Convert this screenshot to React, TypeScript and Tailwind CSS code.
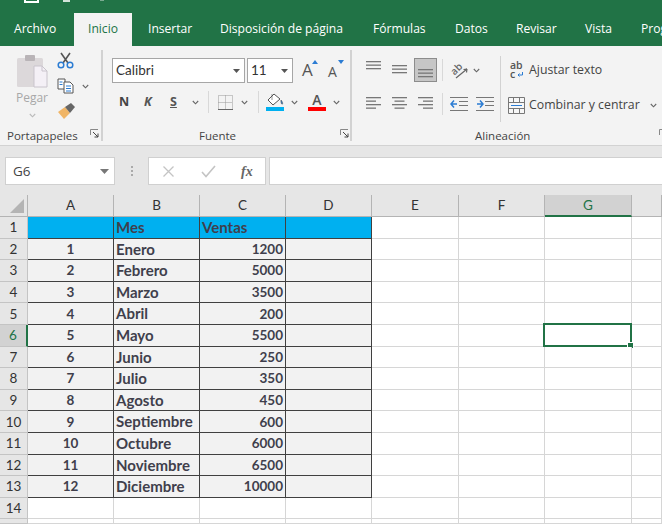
const TABS = [
  { label: 'Archivo', cls: 'ml-[14px] w-[44px]' },
  { label: 'Inicio', cls: 'ml-[16px] w-[58px] justify-center bg-[#f3f3f3] text-[#217346]' },
  { label: 'Insertar', cls: 'ml-[16px] w-[42px]' },
  { label: 'Disposición de página', cls: 'ml-[30px] w-[124px]' },
  { label: 'Fórmulas', cls: 'ml-[29px] w-[53px]' },
  { label: 'Datos', cls: 'ml-[29px] w-[32px]' },
  { label: 'Revisar', cls: 'ml-[29px] w-[40px]' },
  { label: 'Vista', cls: 'ml-[29px] w-[27px]' },
  { label: 'Programador', cls: 'ml-[29px] w-[70px]' },
];

const COLS = ['A', 'B', 'C', 'D', 'E', 'F', 'G', ''];

const DATA: Array<[string, string, string]> = [
  ['', 'Mes', 'Ventas'],
  ['1', 'Enero', '1200'],
  ['2', 'Febrero', '5000'],
  ['3', 'Marzo', '3500'],
  ['4', 'Abril', '200'],
  ['5', 'Mayo', '5500'],
  ['6', 'Junio', '250'],
  ['7', 'Julio', '350'],
  ['8', 'Agosto', '450'],
  ['9', 'Septiembre', '600'],
  ['10', 'Octubre', '6000'],
  ['11', 'Noviembre', '6500'],
  ['12', 'Diciembre', '10000'],
  ['', '', ''],
  ['', '', ''],
];

function Chev({ className = '' }: { className?: string }) {
  return (
    <svg width="7" height="5" viewBox="0 0 7 5" className={className}>
      <path d="M.8 1 3.5 3.8 6.2 1" fill="none" stroke="#666" strokeWidth="1.1" />
    </svg>
  );
}

function Launcher({ className = '' }: { className?: string }) {
  return (
    <svg width="9" height="9" viewBox="0 0 9 9" className={className}>
      <path d="M.5 6V.5H8" fill="none" stroke="#888" />
      <path d="M3 3 8 8M8 4.5V8H4.5" fill="none" stroke="#444" />
    </svg>
  );
}

function Lines({ widths, align }: { widths: number[]; align: 'left' | 'center' | 'right' }) {
  const x = (w: number) => (align === 'left' ? 0 : align === 'center' ? (15 - w) / 2 : 15 - w);
  return (
    <svg width="15" height={widths.length * 3.5} viewBox={`0 0 15 ${widths.length * 3.5}`}>
      {widths.map((w, i) => (
        <rect key={i} x={x(w)} y={i * 3.5} width={w} height="1.3" fill="#777" />
      ))}
    </svg>
  );
}

function VSep({ className = '' }: { className?: string }) {
  return <div className={`w-px h-[22px] bg-[#d8d8d8] ${className}`} />;
}

function Clipboard() {
  return (
    <div className="w-[103px] shrink-0 h-[91px] my-[4px] border-r-2 border-[#d2d2d2] flex flex-col relative">
      <div className="flex">
        <div className="ml-[15px] w-[34px] flex flex-col items-center">
          <svg width="32" height="33" viewBox="0 0 32 33" className="mt-[5px]">
            <rect x="1" y="3" width="26" height="29" rx="1.5" fill="#dcd8da" />
            <rect x="9" y="0" width="10" height="6" rx="1" fill="#b9b4b7" />
            <path d="M18 11h8l5 5v16H18z" fill="#f4f0f6" stroke="#c9c4cc" />
            <path d="M26 11v5h5" fill="none" stroke="#c9c4cc" />
          </svg>
          <span className="font-['Open_Sans',sans-serif] text-[12px] leading-[16px] mt-[2px] text-[#a8a8a8]">Pegar</span>
          <Chev className="mt-[7px] opacity-40" />
        </div>
        <div className="ml-[8px] flex flex-col">
          <svg width="17" height="17" viewBox="0 0 17 17" className="mt-[2px]">
            <path d="M4 1 11 11M13 1 6 11" stroke="#555" strokeWidth="1.6" fill="none" />
            <circle cx="4" cy="13" r="2.8" fill="none" stroke="#2b7cd3" strokeWidth="1.5" />
            <circle cx="13" cy="13" r="2.8" fill="none" stroke="#2b7cd3" strokeWidth="1.5" />
          </svg>
          <div className="flex items-center mt-[9px]">
            <svg width="17" height="16" viewBox="0 0 17 16">
              <path d="M1 1h7v10H1z" fill="#fff" stroke="#555" />
              <path d="M7 4h6l3 3v8H7z" fill="#fff" stroke="#555" />
              <path d="M9 8h5M9 10.5h5M9 13h5M2.5 4h3M2.5 6.5h3" stroke="#2b7cd3" />
            </svg>
            <Chev className="ml-[8px]" />
          </div>
          <svg width="19" height="16" viewBox="0 0 19 16" className="mt-[9px]">
            <path d="M1 9 8 4l5 6-6 6z" fill="#f0b566" />
            <path d="M8 4 14 0l4 4-5 6z" fill="#666" />
          </svg>
        </div>
      </div>
      <div className="absolute left-[7px] top-[78px] font-['Open_Sans',sans-serif] text-[11.5px] leading-[16px] text-[#444]">
        Portapapeles
      </div>
      <Launcher className="absolute left-[90px] top-[79px]" />
    </div>
  );
}

function Font() {
  return (
    <div className="w-[249px] shrink-0 h-[91px] my-[4px] border-r-2 border-[#d2d2d2] relative">
      <div className="flex items-center pt-[8px] pl-[9px]">
        <div className="w-[133px] h-[25px] bg-white border border-[#a6a6a6] flex items-center justify-between pl-[3px] pr-[4px]">
          <span className="font-['Lato',sans-serif] text-[13.5px] text-[#333]">Calibri</span>
          <svg width="7" height="4" viewBox="0 0 7 4"><path d="M0 0h7L3.500 4z" fill="#555" /></svg>
        </div>
        <div className="ml-[2px] w-[46px] h-[25px] bg-white border border-[#a6a6a6] flex items-center justify-between pl-[3px] pr-[4px]">
          <span className="font-['Lato',sans-serif] text-[13.5px] text-[#333]">11</span>
          <svg width="7" height="4" viewBox="0 0 7 4"><path d="M0 0h7L3.500 4z" fill="#555" /></svg>
        </div>
        <div className="ml-[9px] relative w-[15px] h-[20px] -mt-[5px]">
          <span className="font-['Open_Sans',sans-serif] text-[17px] leading-[20px] text-[#555]">A</span>
          <svg width="6" height="4" viewBox="0 0 6 4" className="absolute left-[10px] top-[2px]"><path d="M3 0 6 4H0z" fill="#2b7cd3" /></svg>
        </div>
        <div className="ml-[11px] relative w-[17px] h-[20px] -mt-[3px]">
          <span className="font-['Open_Sans',sans-serif] text-[14px] leading-[20px] text-[#555]">A</span>
          <svg width="6" height="4" viewBox="0 0 6 4" className="absolute left-[10px] top-[1px]"><path d="M0 0h6L3 4z" fill="#2b7cd3" /></svg>
        </div>
      </div>
      <div className="flex items-center mt-[7px] pl-[16px] h-[24px]">
        <span className="font-['Open_Sans',sans-serif] font-bold text-[12.5px] text-[#444] w-[10px]">N</span>
        <span className="font-['Open_Sans',sans-serif] font-bold italic text-[12.5px] text-[#555] w-[10px] ml-[15px]">K</span>
        <span className="font-['Open_Sans',sans-serif] font-bold underline text-[12.5px] text-[#555] w-[10px] ml-[16px]">S</span>
        <Chev className="ml-[12px]" />
        <VSep className="ml-[9px]" />
        <svg width="15" height="15" viewBox="0 0 15 15" className="ml-[9px]">
          <path d="M.5.5h14v14H.5zM7.500.5v14M.5 7.500h14" fill="none" stroke="#999" strokeDasharray="1 1" />
          <path d="M0 14.500h15" stroke="#666" />
        </svg>
        <Chev className="ml-[8px]" />
        <VSep className="ml-[10px]" />
        <div className="ml-[7px] w-[18px] flex flex-col">
          <svg width="18" height="13" viewBox="0 0 18 13">
            <path d="M8 1 2 7l5 5 7-6z" fill="#fff" stroke="#555" />
            <path d="M6 1v6M15 7c1.500 2 2 3 1.500 4S14.500 10 15 7z" fill="#2b7cd3" stroke="#555" strokeWidth=".6" />
          </svg>
          <div className="h-[4px] bg-[#00b0f0] mt-[1px]" />
        </div>
        <Chev className="ml-[7px]" />
        <div className="ml-[10px] w-[18px] flex flex-col items-center">
          <span className="font-['Open_Sans',sans-serif] font-semibold text-[14px] leading-[14px] text-[#555]">A</span>
          <div className="h-[4px] w-full bg-[#ff0000]" />
        </div>
        <Chev className="ml-[7px]" />
      </div>
      <div className="absolute left-[96px] top-[78px] font-['Open_Sans',sans-serif] text-[11.5px] leading-[16px] text-[#444]">Fuente</div>
      <Launcher className="absolute left-[237px] top-[79px]" />
    </div>
  );
}

function Align() {
  return (
    <div className="grow h-[91px] my-[4px] relative flex">
      <div className="w-[149px] shrink-0 border-r border-[#d2d2d2] h-[66px] mt-[6px]">
        <div className="flex items-center pl-[14px] h-[26px] mt-[1px]">
          <div className="h-[24px] w-[15px] flex items-start pt-[3px]"><Lines widths={[15, 15, 15]} align="left" /></div>
          <div className="h-[24px] ml-[11px] w-[15px] flex items-center"><Lines widths={[15, 15, 15]} align="left" /></div>
          <div className="ml-[7px] w-[23px] h-[24px] bg-[#c6c6c6] border border-[#8c8c8c] flex items-end justify-center pb-[2px]">
            <Lines widths={[15, 15, 15]} align="left" />
          </div>
          <VSep className="ml-[5px]" />
          <svg width="19" height="17" viewBox="0 0 19 17" className="ml-[7px] overflow-visible">
            <text x="1" y="11" transform="rotate(-45 6 8)" fontFamily="Open Sans" fontSize="10" fontWeight="600" fill="#666">ab</text>
            <path d="m6 16 11-9M17 7l-3.500.5M17 7l-.5 3.500" stroke="#666" strokeWidth="1.200" fill="none" />
          </svg>
          <Chev className="ml-[4px]" />
        </div>
        <div className="flex items-center pl-[14px] h-[24px] mt-[9px]">
          <Lines widths={[15, 10, 15, 10]} align="left" />
          <div className="ml-[11px]"><Lines widths={[15, 10, 15, 10]} align="center" /></div>
          <div className="ml-[11px]"><Lines widths={[15, 10, 15, 10]} align="right" /></div>
          <VSep className="ml-[9px]" />
          <svg width="18" height="14" viewBox="0 0 18 14" className="ml-[7px]">
            <path d="M7 7H1M4 3.500 1 7l3 3.500" stroke="#2b7cd3" strokeWidth="1.500" fill="none" />
            <path d="M0 .5h18M9 4.500h9M9 8.500h9M0 13.500h18" stroke="#777" />
          </svg>
          <svg width="18" height="14" viewBox="0 0 18 14" className="ml-[8px]">
            <path d="M1 7h6M4 3.500 7 7l-3 3.500" stroke="#2b7cd3" strokeWidth="1.500" fill="none" />
            <path d="M0 .5h18M9 4.500h9M9 8.500h9M0 13.500h18" stroke="#777" />
          </svg>
        </div>
      </div>
      <div className="pl-[7px] pt-[6px]">
        <div className="flex items-center h-[26px] mt-[1px]">
          <div className="ml-[2px] w-[14px] relative flex flex-col font-['Open_Sans',sans-serif] font-semibold text-[10.5px] leading-[9px] text-[#555]">
            <span>ab</span>
            <span>c</span>
            <svg width="6" height="5" viewBox="0 0 6 5" className="absolute left-[7px] top-[11px]">
              <path d="M5.500 0v3H1M2.500 1.500 1 3l1.500 1.500" fill="none" stroke="#2b7cd3" />
            </svg>
          </div>
          <span className="ml-[5px] font-['Open_Sans',sans-serif] text-[12.3px] text-[#444] whitespace-nowrap">Ajustar texto</span>
        </div>
        <div className="flex items-center h-[24px] mt-[10px]">
          <svg width="17" height="17" viewBox="0 0 17 17">
            <path d="M.5.5h16v16H.5zM.5 5.500h16M.5 11.500h16M5.500.5v5M11.500.5v5M5.500 11.500v5M11.500 11.500v5" fill="#f7f7f7" stroke="#777" />
            <path d="M3 8.500h11" stroke="#2b7cd3" />
          </svg>
          <span className="ml-[4px] font-['Open_Sans',sans-serif] text-[12.3px] text-[#444] whitespace-nowrap">Combinar y centrar</span>
          <Chev className="ml-[10px]" />
        </div>
      </div>
      <div className="absolute left-[123px] top-[78px] font-['Open_Sans',sans-serif] text-[11.5px] leading-[16px] text-[#444]">Alineación</div>
      <Launcher className="absolute left-[307px] top-[79px]" />
    </div>
  );
}

function FormulaBar() {
  return (
    <div className="h-[50px] bg-[#e6e6e6] border-t border-[#d2d2d2] flex items-start pt-[11px] pl-[5px] shrink-0">
      <div className="w-[110px] h-[28px] bg-white border border-[#d0d0d0] flex items-center justify-between pl-[7px] pr-[5px]">
        <span className="font-['Open_Sans',sans-serif] text-[13.5px] text-[#444]">G6</span>
        <svg width="9" height="5" viewBox="0 0 9 5"><path d="M0 0h9L4.500 5z" fill="#777" /></svg>
      </div>
      <div className="ml-[16px] mt-[9px] flex flex-col gap-[2px]">
        <div className="w-[2px] h-[2px] bg-[#aaa]" />
        <div className="w-[2px] h-[2px] bg-[#aaa]" />
        <div className="w-[2px] h-[2px] bg-[#aaa]" />
      </div>
      <div className="ml-[15px] w-[118px] h-[28px] bg-white border border-[#d0d0d0] flex items-center pl-[13px]">
        <svg width="13" height="13" viewBox="0 0 13 13"><path d="m1.500 1.500 10 10M11.500 1.500l-10 10" stroke="#c4c4c4" strokeWidth="1.300" /></svg>
        <svg width="15" height="13" viewBox="0 0 15 13" className="ml-[26px]"><path d="m1 7 4 4.500L14 1" fill="none" stroke="#c4c4c4" strokeWidth="1.600" /></svg>
        <span className="ml-[25px] font-['Liberation_Serif',serif] italic font-bold text-[14px] text-[#666]">fx</span>
      </div>
      <div className="ml-[3px] grow h-[28px] bg-white border border-[#d0d0d0] border-r-0" />
    </div>
  );
}

function cellClass(r: number, c: number) {
  const inTable = c < 4 && r < 13;
  if (!inTable) return 'bg-white border-r border-b border-[#d6d6d6]';
  if (r === 0) return 'bg-[#00b0f0] border-r border-b border-[#404040]';
  return 'bg-[#f2f2f2] border-r border-b border-[#404040]';
}

function Sheet() {
  return (
    <div className="grid font-['Lato',sans-serif] grid-cols-[28px_86px_86px_86px_86px_87px_86px_87px_1fr] grid-rows-[22px_repeat(14,21.6px)_5px]">
      <div className="bg-[#e6e6e6] border-r border-b border-[#b4b4b4] flex items-end justify-end pr-[3px] pb-[3px]">
        <svg width="14" height="14" viewBox="0 0 14 14"><path d="M14 0v14H0z" fill="#b4b4b4" /></svg>
      </div>
      {COLS.map((col, i) => (
        <div
          key={i}
          className={
            col === 'G'
              ? 'bg-[#d2d2d2] border-r border-[#b4b4b4] border-b-2 border-b-[#217346] flex items-center justify-center text-[13.5px] text-[#217346]'
              : 'bg-[#e6e6e6] border-r border-b border-[#b4b4b4] flex items-center justify-center text-[13.5px] text-[#333]'
          }
        >
          {col}
        </div>
      ))}
      {DATA.map((row, r) => (
        <div key={r} className="contents">
          <div
            className={
              r === 5
                ? 'bg-[#d2d2d2] border-r-2 border-r-[#217346] border-b border-[#c4c4c4] flex items-center justify-center text-[13.5px] text-[#217346]'
                : 'bg-[#e6e6e6] border-r border-b border-[#c4c4c4] flex items-center justify-center text-[13.5px] text-[#333]'
            }
          >
            {r < 14 ? r + 1 : ''}
          </div>
          <div className={`${cellClass(r, 0)} flex items-center justify-center font-bold text-[13.5px] text-[#403f4c]`}>{row[0]}</div>
          <div className={`${cellClass(r, 1)} flex items-center pl-[2px] font-bold text-[15px] text-[#403f4c] whitespace-nowrap`}>{row[1]}</div>
          <div
            className={`${cellClass(r, 2)} flex items-center font-bold text-[#403f4c] ${
              r === 0 ? 'justify-start pl-[2px] text-[15px]' : 'justify-end pr-[2px] text-[13.5px]'
            }`}
          >
            {row[2]}
          </div>
          <div className={cellClass(r, 3)} />
          <div className={cellClass(r, 4)} />
          <div className={cellClass(r, 5)} />
          <div className={`${cellClass(r, 6)} relative`}>
            {r === 5 && (
              <div className="absolute -left-[2px] -top-[2px] -right-px -bottom-px border-2 border-[#217346]">
                <div className="absolute -right-[4px] -bottom-[4px] w-[7px] h-[7px] bg-[#217346] border border-white" />
              </div>
            )}
          </div>
          <div className={cellClass(r, 7)} />
        </div>
      ))}
    </div>
  );
}

export default function App() {
  return (
    <div className="w-[662px] h-[525px] overflow-hidden bg-white flex flex-col">
      {/* title bar + tabs */}
      <div className="h-[46px] bg-[#217346] flex items-end shrink-0 relative">
        {TABS.map((t) => (
          <div
            key={t.label}
            className={`h-[33px] shrink-0 flex items-center whitespace-nowrap font-['Open_Sans',sans-serif] text-[12.1px] ${
              t.label === 'Inicio' ? '' : 'text-white'
            } ${t.cls}`}
          >
            {t.label}
          </div>
        ))}
        <div className="absolute left-[24px] top-0 w-[15px] h-[3px] border-x-2 border-b-2 border-white" />
        <div className="absolute left-[63px] top-0 w-[7px] h-[2px] bg-white/80" />
        <div className="absolute left-[100px] top-0 w-[4px] h-[1px] bg-white/40" />
      </div>

      {/* ribbon */}
      <div className="h-[99px] bg-[#f3f3f3] flex shrink-0">
        <Clipboard />
        <Font />
        <Align />
      </div>

      <FormulaBar />
      <Sheet />
    </div>
  );
}
